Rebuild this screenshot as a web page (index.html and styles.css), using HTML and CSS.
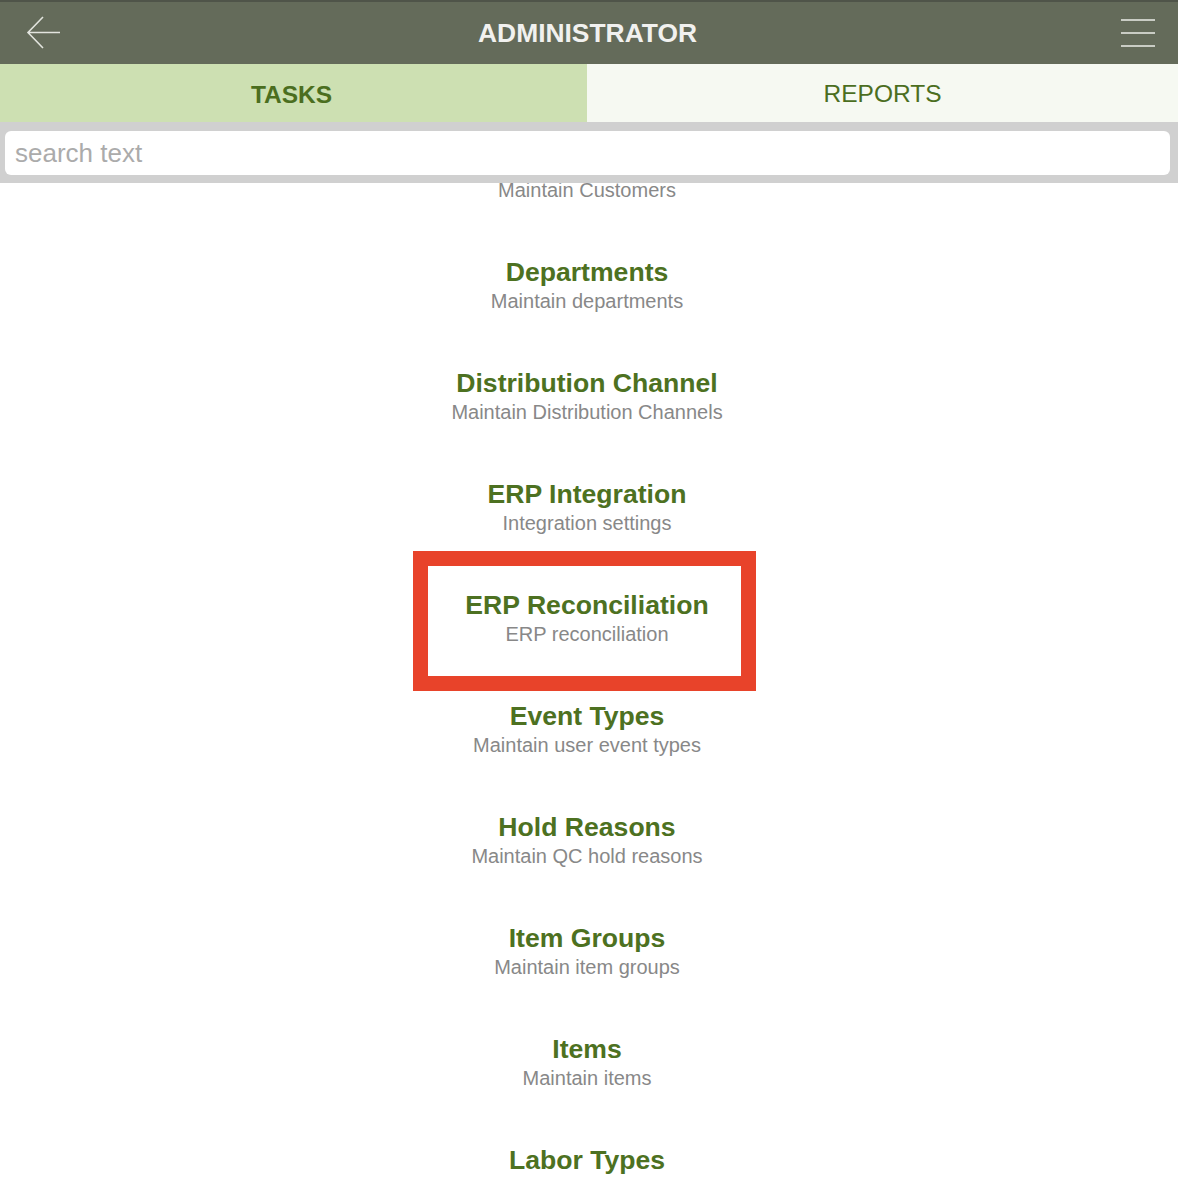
FILE: index.html
```html
<!DOCTYPE html>
<html>
<head>
<meta charset="utf-8">
<link rel="stylesheet" href="styles.css">
</head>
<body>
<div class="app">
  <header class="topbar">
    <button class="icon-btn back" aria-label="Back">
      <svg width="36" height="34" viewBox="0 0 36 34"><path d="M17 1 L2 16.5 L17 32 M2 16.5 H34" fill="none" stroke="#e2e4de" stroke-width="1.6"/></svg>
    </button>
    <h1 class="title">ADMINISTRATOR</h1>
    <button class="icon-btn menu" aria-label="Menu">
      <svg width="36" height="30" viewBox="0 0 36 30"><path d="M1 2 H35 M1 15 H35 M1 28 H35" fill="none" stroke="#c9ccc4" stroke-width="1.8"/></svg>
    </button>
  </header>
  <nav class="tabs">
    <div class="tab active">TASKS</div>
    <div class="tab">REPORTS</div>
  </nav>
  <div class="searchbar">
    <div class="search-input"><span class="placeholder">search text</span></div>
  </div>
  <div class="list">
    <div class="items">
      <div class="item"><div class="item-title">Customers</div><div class="item-sub">Maintain Customers</div></div>
      <div class="item"><div class="item-title">Departments</div><div class="item-sub">Maintain departments</div></div>
      <div class="item"><div class="item-title">Distribution Channel</div><div class="item-sub">Maintain Distribution Channels</div></div>
      <div class="item"><div class="item-title">ERP Integration</div><div class="item-sub">Integration settings</div></div>
      <div class="item highlighted"><div class="item-title">ERP Reconciliation</div><div class="item-sub">ERP reconciliation</div></div>
      <div class="item"><div class="item-title">Event Types</div><div class="item-sub">Maintain user event types</div></div>
      <div class="item"><div class="item-title">Hold Reasons</div><div class="item-sub">Maintain QC hold reasons</div></div>
      <div class="item"><div class="item-title">Item Groups</div><div class="item-sub">Maintain item groups</div></div>
      <div class="item"><div class="item-title">Items</div><div class="item-sub">Maintain items</div></div>
      <div class="item"><div class="item-title">Labor Types</div><div class="item-sub">Maintain labor types</div></div>
    </div>
  </div>
</div>
</body>
</html>
```

FILE: styles.css
```css
*, *::before, *::after { box-sizing: border-box; }
html, body { margin: 0; padding: 0; background: #fff; }
body { font-family: "Liberation Sans", Arial, sans-serif; }
.app { width: 1178px; height: 1180px; display: flex; flex-direction: column; overflow: hidden; }

.topbar {
  height: 64px;
  flex: 0 0 64px;
  background: #646b5a;
  border-top: 2px solid #4f5449;
  display: grid;
  grid-template-columns: 1fr auto 1fr;
  align-items: center;
  padding: 0 22px 0 26px;
}
.icon-btn { background: none; border: 0; padding: 0; display: flex; align-items: center; }
.back { justify-self: start; margin-top: -1px; }
.menu { justify-self: end; }
.title {
  margin: 0;
  padding-right: 7px;
  color: #f1f1ef;
  font-size: 26.4px;
  font-weight: bold;
}

.tabs { display: grid; grid-template-columns: 587px 1fr; height: 58px; flex: 0 0 58px; }
.tab {
  display: flex; align-items: center; justify-content: center;
  font-size: 24.5px; color: #4b6e1f; background: #f6f9f2;
  padding-top: 2px;
}
.tab.active { background: #cde0b2; font-weight: bold; padding-top: 4px; padding-right: 4px; }

.searchbar {
  flex: 0 0 61px;
  background: #d0d0d0;
  padding: 9px 8px 8px 5px;
}
.search-input {
  height: 44px;
  background: #fff;
  border-radius: 6px;
  display: flex; align-items: center;
  padding-left: 10px;
}
.placeholder { color: #ababab; font-size: 26px; }

.list { flex: 1; overflow: hidden; padding-right: 4px; }
.items { margin-top: -62px; }
.item {
  height: 111px;
  padding-top: 25px;
  text-align: center;
  position: relative;
}
.item-title { font-size: 26.6px; font-weight: bold; color: #4d7121; line-height: 30px; }
.item-sub { font-size: 20px; color: #888; line-height: 28px; }
.item.highlighted::after {
  content: "";
  position: absolute;
  top: -14px;
  left: calc(50% - 174px);
  width: 343px;
  height: 140px;
  border: 15px solid #e8432a;
}
```
